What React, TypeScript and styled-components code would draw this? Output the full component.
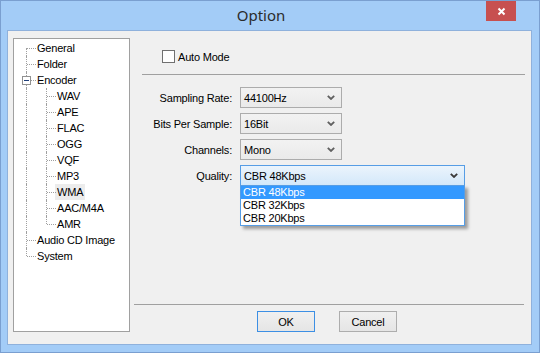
import { Fragment } from 'react';
import styled, { createGlobalStyle } from 'styled-components';

const GlobalStyle = createGlobalStyle`
  html, body {
    margin: 0;
    padding: 0;
    background: #a3ccf7;
  }
  * {
    box-sizing: border-box;
  }
`;

const Window = styled.div`
  width: 540px;
  height: 353px;
  background: #a3ccf7;
  border: 1px solid #7a9fd0;
  display: flex;
  flex-direction: column;
  font-family: 'Liberation Sans', Arial, sans-serif;
  font-size: 11px;
  letter-spacing: -0.2px;
  color: #000;
`;

const TitleBar = styled.div`
  height: 29px;
  display: flex;
  align-items: flex-start;
`;

const Title = styled.div`
  flex: 1;
  padding-left: 35px;
  text-align: center;
  line-height: 29px;
  font-family: 'Noto Sans', 'Open Sans', sans-serif;
  font-size: 15px;
  letter-spacing: 0;
  color: #2b2b2b;
`;

const CloseButton = styled.div`
  width: 30px;
  height: 20px;
  margin-right: 23px;
  background: #c75050;
  display: flex;
  align-items: center;
  justify-content: center;
`;

const Client = styled.div`
  flex: 1;
  margin: 0 7px 7px 6px;
  background: #f0f0f0;
  border: 1px solid #8fb1dc;
  display: flex;
  padding: 7px 0 12px 5px;
`;

const TreePanel = styled.div`
  width: 117px;
  height: 294px;
  background: #fff;
  border: 1px solid #a0a0a0;
  padding-top: 1px;
`;

const TreeRow = styled.div<{ $level: number }>`
  position: relative;
  height: 16px;
  line-height: 16px;
  padding-left: ${(p) => 21 + p.$level * 20}px;
  white-space: nowrap;
`;

const TreeLabel = styled.span<{ $selected?: boolean }>`
  display: inline-block;
  height: 16px;
  padding: 0 2px;
  background: ${(p) => (p.$selected ? '#ececec' : 'transparent')};
`;

const VLine = styled.span`
  position: absolute;
  width: 0;
  border-left: 1px dotted #a0a0a0;
`;

const HLine = styled.span`
  position: absolute;
  top: 8px;
  width: 9px;
  height: 0;
  border-top: 1px dotted #a0a0a0;
`;

const Expander = styled.span`
  position: absolute;
  left: 8px;
  top: 4px;
  width: 9px;
  height: 9px;
  background: #fff;
  border: 1px solid #919191;
  display: flex;
  align-items: center;
  justify-content: center;
  &::after {
    content: '';
    width: 5px;
    height: 1px;
    background: #1f3f7a;
  }
`;

const Content = styled.div`
  flex: 1;
  display: flex;
  flex-direction: column;
`;

const AutoRow = styled.label`
  margin-top: 12px;
  padding-left: 32px;
  display: flex;
  align-items: center;
  gap: 3px;
  height: 13px;
`;

const CheckBox = styled.span`
  width: 13px;
  height: 13px;
  background: #fff;
  border: 1px solid #707070;
`;

const Separator = styled.div<{ $left: number; $right: number; $top: number }>`
  height: 1px;
  background: #a0a0a0;
  margin: ${(p) => `${p.$top}px ${p.$right}px 0 ${p.$left}px`};
`;

const Form = styled.div`
  margin-top: 12px;
  display: grid;
  grid-template-columns: 102px auto;
  column-gap: 8px;
  row-gap: 5px;
  justify-content: start;
  align-items: center;
`;

const FieldLabel = styled.div`
  text-align: right;
`;

const ComboWrap = styled.div`
  position: relative;
`;

const Combo = styled.div<{ $width: number; $open?: boolean }>`
  width: ${(p) => p.$width}px;
  height: 21px;
  border: 1px solid ${(p) => (p.$open ? '#569de5' : '#acacac')};
  background: ${(p) =>
    p.$open
      ? 'linear-gradient(#ebf4fc, #d3e8fa)'
      : 'linear-gradient(#f2f2f2, #eaeaea)'};
  display: flex;
  align-items: center;
  justify-content: space-between;
  padding: 0 6px 0 3px;
`;

const DropList = styled.div`
  position: absolute;
  left: 0;
  top: calc(100% - 1px);
  width: 225px;
  background: #fff;
  border: 1px solid #569de5;
  box-shadow: 3px 3px 3px rgba(0, 0, 0, 0.35);
  z-index: 2;
`;

const DropItem = styled.div<{ $active?: boolean }>`
  height: 13px;
  line-height: 13px;
  padding-left: 2px;
  background: ${(p) => (p.$active ? '#3399ff' : 'transparent')};
  color: ${(p) => (p.$active ? '#fff' : '#000')};
`;

const Spacer = styled.div`
  flex: 1;
`;

const ButtonRow = styled.div`
  margin-top: 6px;
  padding-left: 127px;
  display: flex;
  gap: 24px;
`;

const Button = styled.div<{ $default?: boolean }>`
  width: 58px;
  height: 21px;
  border: 1px solid ${(p) => (p.$default ? '#3c8fe4' : '#adadad')};
  background: linear-gradient(#f0f0f0, #e5e5e5);
  display: flex;
  align-items: center;
  justify-content: center;
`;

const Chevron = ({ dark }: { dark?: boolean }) => (
  <svg width="8" height="5" viewBox="0 0 8 5">
    <polyline
      points="0.8,0.8 4,4 7.2,0.8"
      fill="none"
      stroke={dark ? '#3a3a3a' : '#606060'}
      strokeWidth="1.8"
    />
  </svg>
);

interface TreeItem {
  label: string;
  level: number;
  first?: boolean;
  last?: boolean;
  expanded?: boolean;
  selected?: boolean;
}

const tree: TreeItem[] = [
  { label: 'General', level: 0, first: true },
  { label: 'Folder', level: 0 },
  { label: 'Encoder', level: 0, expanded: true },
  { label: 'WAV', level: 1, first: true },
  { label: 'APE', level: 1 },
  { label: 'FLAC', level: 1 },
  { label: 'OGG', level: 1 },
  { label: 'VQF', level: 1 },
  { label: 'MP3', level: 1 },
  { label: 'WMA', level: 1, selected: true },
  { label: 'AAC/M4A', level: 1 },
  { label: 'AMR', level: 1, last: true },
  { label: 'Audio CD Image', level: 0 },
  { label: 'System', level: 0, last: true },
];

const fields = [
  { label: 'Sampling Rate:', value: '44100Hz' },
  { label: 'Bits Per Sample:', value: '16Bit' },
  { label: 'Channels:', value: 'Mono' },
];

const App = () => {
  return (
    <>
      <GlobalStyle />
      <Window>
        <TitleBar>
          <Title>Option</Title>
          <CloseButton>
            <svg width="9" height="9" viewBox="0 0 9 9">
              <path d="M1.5 1.5 L7.5 7.5 M7.5 1.5 L1.5 7.5" stroke="#fff" strokeWidth="2" />
            </svg>
          </CloseButton>
        </TitleBar>
        <Client>
          <TreePanel>
            {tree.map((item) => {
              const x = 12 + item.level * 20;
              return (
                <TreeRow key={item.label} $level={item.level}>
                  {item.level > 0 && <VLine style={{ left: 12, top: 0, bottom: 0 }} />}
                  <VLine
                    style={{
                      left: x,
                      top: item.first && item.level === 0 ? 8 : 0,
                      bottom: item.last ? 8 : 0,
                    }}
                  />
                  <HLine style={{ left: x + 1 }} />
                  {item.expanded && <Expander />}
                  <TreeLabel $selected={item.selected}>{item.label}</TreeLabel>
                </TreeRow>
              );
            })}
          </TreePanel>
          <Content>
            <AutoRow>
              <CheckBox />
              Auto Mode
            </AutoRow>
            <Separator $top={11} $left={12} $right={6} />
            <Form>
              {fields.map((f) => (
                <Fragment key={f.label}>
                  <FieldLabel>{f.label}</FieldLabel>
                  <Combo $width={102}>
                    {f.value}
                    <Chevron />
                  </Combo>
                </Fragment>
              ))}
              <FieldLabel>Quality:</FieldLabel>
              <ComboWrap>
                <Combo $width={225} $open>
                  CBR 48Kbps
                  <Chevron dark />
                </Combo>
                <DropList>
                  <DropItem $active>CBR 48Kbps</DropItem>
                  <DropItem>CBR 32Kbps</DropItem>
                  <DropItem>CBR 20Kbps</DropItem>
                </DropList>
              </ComboWrap>
            </Form>
            <Spacer />
            <Separator $top={0} $left={4} $right={7} />
            <ButtonRow>
              <Button $default>OK</Button>
              <Button>Cancel</Button>
            </ButtonRow>
          </Content>
        </Client>
      </Window>
    </>
  );
};

export default App;
